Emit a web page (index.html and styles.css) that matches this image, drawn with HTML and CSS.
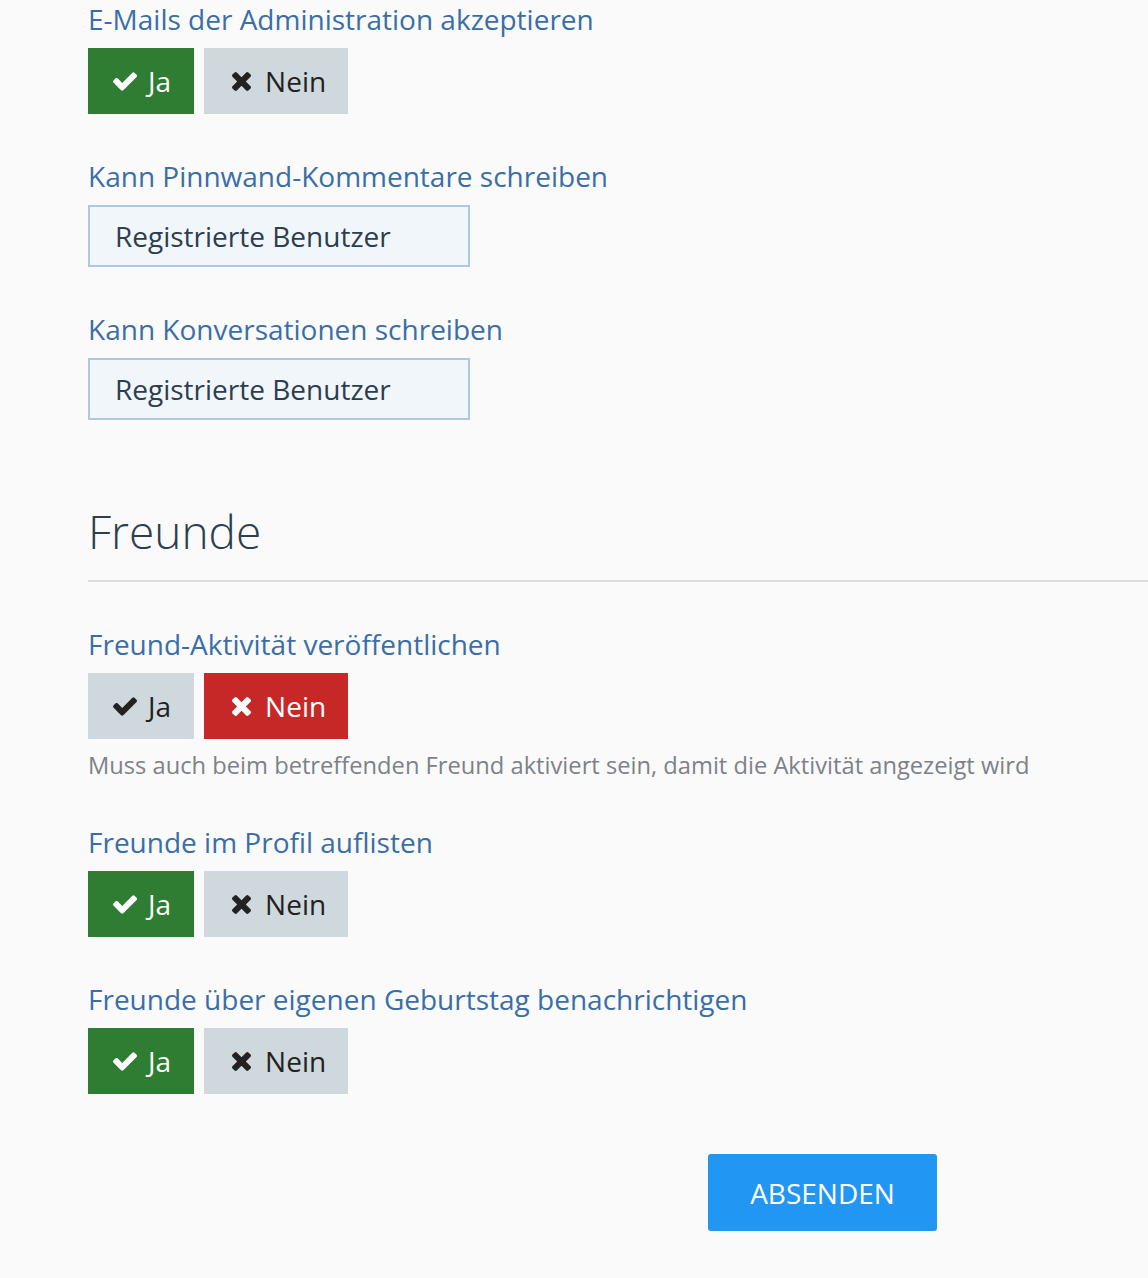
FILE: index.html
```html
<!DOCTYPE html>
<html lang="de">
<head>
<meta charset="utf-8">
<link rel="stylesheet" href="styles.css">
</head>
<body>
<div class="page">
  <div class="field">
    <div class="label">E-Mails der Administration akzeptieren</div>
    <div class="toggle">
      <button class="btn yes on"><svg class="ic-check" viewBox="121 334 1550 1188"><path d="M1671 566q0 40-28 68l-724 724-136 136q-28 28-68 28t-68-28l-136-136-362-362q-28-28-28-68t28-68l136-136q28-28 68-28t68 28l294 295 656-657q28-28 68-28t68 28l136 136q28 28 28 68z"/></svg>Ja</button>
      <button class="btn no"><svg class="ic-times" viewBox="302 366 1188 1188"><path d="M1490 1322q0 40-28 68l-136 136q-28 28-68 28t-68-28l-294-294-294 294q-28 28-68 28t-68-28l-136-136q-28-28-28-68t28-68l294-294-294-294q-28-28-28-68t28-68l136-136q28-28 68-28t68 28l294 294 294-294q28-28 68-28t68 28l136 136q28 28 28 68t-28 68l-294 294 294 294q28 28 28 68z"/></svg>Nein</button>
    </div>
  </div>
  <div class="field">
    <div class="label">Kann Pinnwand-Kommentare schreiben</div>
    <div class="select">Registrierte Benutzer</div>
  </div>
  <div class="field">
    <div class="label">Kann Konversationen schreiben</div>
    <div class="select">Registrierte Benutzer</div>
  </div>

  <h2 class="section">Freunde</h2>

  <div class="field">
    <div class="label">Freund-Aktivität veröffentlichen</div>
    <div class="toggle">
      <button class="btn yes"><svg class="ic-check" viewBox="121 334 1550 1188"><path d="M1671 566q0 40-28 68l-724 724-136 136q-28 28-68 28t-68-28l-136-136-362-362q-28-28-28-68t28-68l136-136q28-28 68-28t68 28l294 295 656-657q28-28 68-28t68 28l136 136q28 28 28 68z"/></svg>Ja</button>
      <button class="btn no on"><svg class="ic-times" viewBox="302 366 1188 1188"><path d="M1490 1322q0 40-28 68l-136 136q-28 28-68 28t-68-28l-294-294-294 294q-28 28-68 28t-68-28l-136-136q-28-28-28-68t28-68l294-294-294-294q-28-28-28-68t28-68l136-136q28-28 68-28t68 28l294 294 294-294q28-28 68-28t68 28l136 136q28 28 28 68t-28 68l-294 294 294 294q28 28 28 68z"/></svg>Nein</button>
    </div>
    <div class="help">Muss auch beim betreffenden Freund aktiviert sein, damit die Aktivität angezeigt wird</div>
  </div>
  <div class="field">
    <div class="label">Freunde im Profil auflisten</div>
    <div class="toggle">
      <button class="btn yes on"><svg class="ic-check" viewBox="121 334 1550 1188"><path d="M1671 566q0 40-28 68l-724 724-136 136q-28 28-68 28t-68-28l-136-136-362-362q-28-28-28-68t28-68l136-136q28-28 68-28t68 28l294 295 656-657q28-28 68-28t68 28l136 136q28 28 28 68z"/></svg>Ja</button>
      <button class="btn no"><svg class="ic-times" viewBox="302 366 1188 1188"><path d="M1490 1322q0 40-28 68l-136 136q-28 28-68 28t-68-28l-294-294-294 294q-28 28-68 28t-68-28l-136-136q-28-28-28-68t28-68l294-294-294-294q-28-28-28-68t28-68l136-136q28-28 68-28t68 28l294 294 294-294q28-28 68-28t68 28l136 136q28 28 28 68t-28 68l-294 294 294 294q28 28 28 68z"/></svg>Nein</button>
    </div>
  </div>
  <div class="field">
    <div class="label">Freunde über eigenen Geburtstag benachrichtigen</div>
    <div class="toggle">
      <button class="btn yes on"><svg class="ic-check" viewBox="121 334 1550 1188"><path d="M1671 566q0 40-28 68l-724 724-136 136q-28 28-68 28t-68-28l-136-136-362-362q-28-28-28-68t28-68l136-136q28-28 68-28t68 28l294 295 656-657q28-28 68-28t68 28l136 136q28 28 28 68z"/></svg>Ja</button>
      <button class="btn no"><svg class="ic-times" viewBox="302 366 1188 1188"><path d="M1490 1322q0 40-28 68l-136 136q-28 28-68 28t-68-28l-294-294-294 294q-28 28-68 28t-68-28l-136-136q-28-28-28-68t28-68l294-294-294-294q-28-28-28-68t28-68l136-136q28-28 68-28t68 28l294 294 294-294q28-28 68-28t68 28l136 136q28 28 28 68t-28 68l-294 294 294 294q28 28 28 68z"/></svg>Nein</button>
    </div>
  </div>

  <div class="actions">
    <button class="submit">ABSENDEN</button>
  </div>
</div>
</body>
</html>
```
FILE: styles.css
```css
html, body {
  margin: 0;
  padding: 0;
  background: #fafafa;
}
body {
  font-family: "Open Sans", "Noto Sans", sans-serif;
  color: #2c3e50;
}
.page {
  padding: 1px 0 0 88px;
}
.field {
  margin-bottom: 44px;
}
.label {
  font-size: 28px;
  line-height: 36px;
  color: #3a6ea8;
  margin-bottom: 11px;
  white-space: nowrap;
}
.toggle {
  display: flex;
  gap: 10px;
}
.btn {
  display: flex;
  align-items: center;
  gap: 11px;
  height: 66px;
  padding: 0 23px 0 25px;
  border: none;
  border-radius: 0;
  font-family: inherit;
  font-size: 28px;
  color: #222;
  background: #cfd8dc;
  cursor: pointer;
}
.btn.no {
  padding-right: 22px;
}
.btn svg {
  fill: currentColor;
  flex: none;
}
.ic-check { width: 24px; height: 19px; }
.ic-times { width: 19px; height: 19px; margin-left: 3px; margin-right: 3px; }
.btn.yes.on {
  background: #2e7d32;
  color: #fff;
}
.btn.no.on {
  background: #c62828;
  color: #fff;
}
.select {
  box-sizing: border-box;
  width: 382px;
  height: 62px;
  border: 2px solid #afc8e2;
  background: #f1f6fb;
  padding: 0 0 0 25px;
  display: flex;
  align-items: center;
  font-size: 28px;
  color: #2c3e50;
}
.section {
  margin: 0 0 44px 0;
  padding: 37px 0 19px 0;
  font-size: 46px;
  font-weight: 300;
  line-height: 60px;
  color: #2c3e50;
  border-bottom: 2px solid #dddddd;
}
.help {
  margin-top: 11px;
  font-size: 23.7px;
  line-height: 30px;
  color: #7d8288;
  white-space: nowrap;
}
.actions {
  display: flex;
  padding-left: 620px;
  padding-top: 16px;
}
.submit {
  width: 229px;
  height: 77px;
  border: none;
  border-radius: 3px;
  background: #2196f3;
  color: #fff;
  font-family: inherit;
  font-size: 28px;
}
```
